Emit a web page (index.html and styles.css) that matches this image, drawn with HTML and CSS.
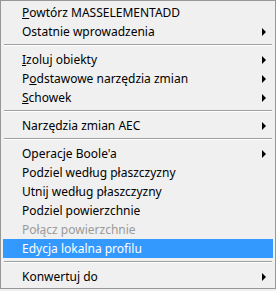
FILE: index.html
```html
<!DOCTYPE html>
<html lang="pl">
  <head>
    <meta charset="UTF-8" />
    <title>Menu kontekstowe</title>
    <link rel="stylesheet" href="styles.css">
  </head>
  <body>
    <ul class="menu">
      <li class="item"><span><u>P</u>owtórz MASSELEMENTADD</span></li>
      <li class="item sub"><span>Ostatnie wprowadzenia</span></li>
      <li class="sep"></li>
      <li class="item sub"><span><u>I</u>zoluj obiekty</span></li>
      <li class="item sub"><span>P<u>o</u>dstawowe narzędzia zmian</span></li>
      <li class="item sub"><span><u>S</u>chowek</span></li>
      <li class="sep"></li>
      <li class="item sub"><span>Narzędzia zmian AEC</span></li>
      <li class="sep"></li>
      <li class="item sub"><span>Operacje Boole'a</span></li>
      <li class="item"><span>Podziel według płaszczyzny</span></li>
      <li class="item"><span>Utnij według płaszczyzny</span></li>
      <li class="item"><span>Podziel powierzchnie</span></li>
      <li class="item disabled"><span>Połącz powierzchnie</span></li>
      <li class="item active"><span>Edycja lokalna profilu</span></li>
      <li class="sep"></li>
      <li class="item sub"><span>Konwertuj do</span></li>
    </ul>
  </body>
</html>
```

FILE: styles.css
```css
body {
  margin: 0;
  background: #f0f0f0;
  font-family: "Noto Sans", "Open Sans", sans-serif;
  font-size: 12px;
  color: #000;
}
.menu {
  list-style: none;
  margin: 0;
  padding: 2px;
  width: 270px;
  background: #f0f0f0;
  border: 1px solid #979797;
}
.item {
  height: 19px;
  line-height: 19px;
  padding-left: 19px;
  display: flex;
  align-items: center;
  justify-content: space-between;
  white-space: nowrap;
}
.item u {
  text-decoration: underline;
  text-underline-offset: 1px;
}
.sub::after {
  content: "";
  width: 0;
  height: 0;
  margin-right: 7px;
  border-left: 4px solid #000;
  border-top: 4px solid transparent;
  border-bottom: 4px solid transparent;
}
.disabled {
  color: #9a9a9a;
}
.active {
  background: #3399ff;
  color: #fff;
}
.sep {
  height: 0;
  margin: 3px 1px 4px 1px;
  border-top: 1px solid #a0a0a0;
  border-bottom: 1px solid #fff;
}
```
